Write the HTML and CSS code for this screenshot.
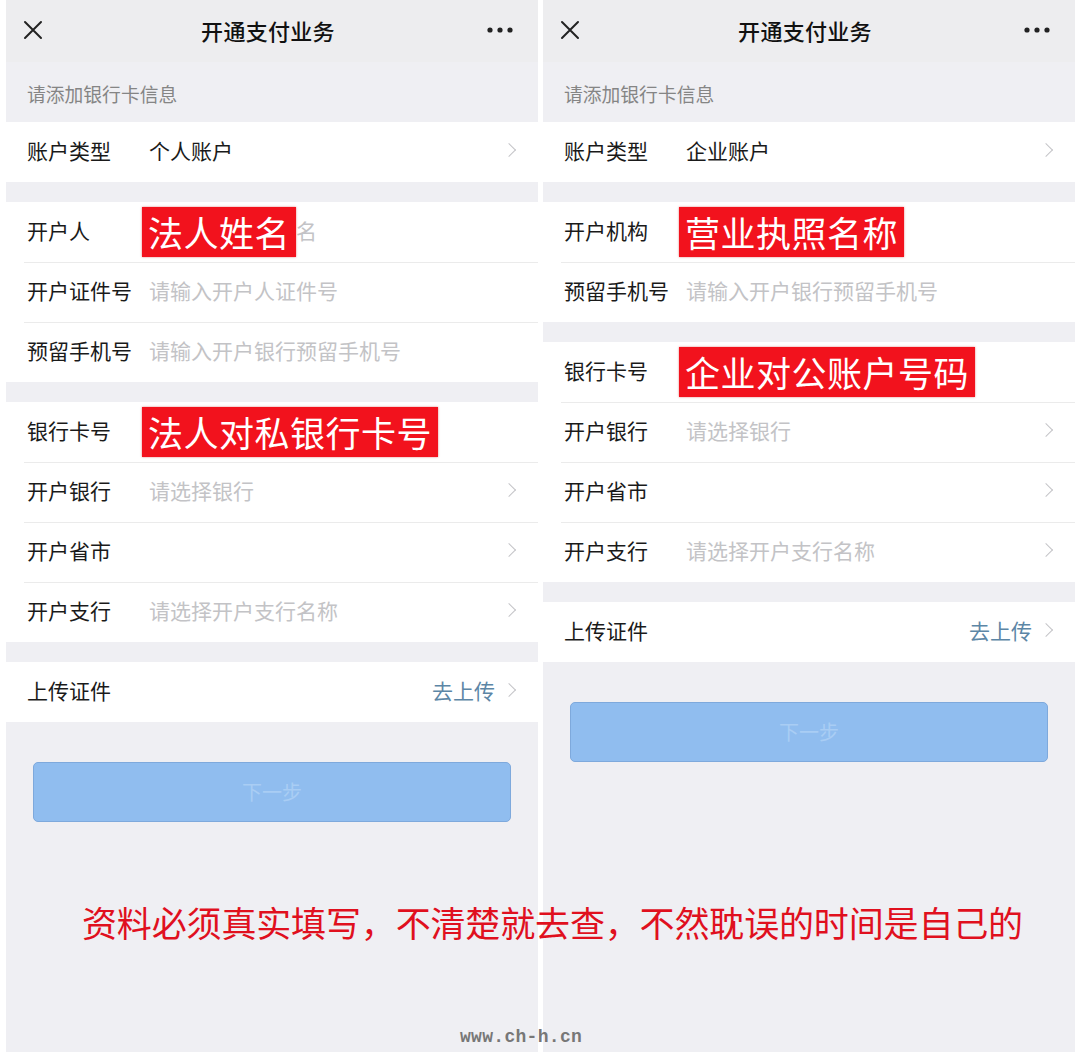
FILE: index.html
```html
<!DOCTYPE html>
<html lang="zh-CN">
<head>
<meta charset="utf-8">
<title>开通支付业务</title>
<link rel="stylesheet" href="styles.css">
</head>
<body>
<div class="canvas">
  <div class="screens">
    <section class="phone">
      <header class="nav">
        <svg class="nav-close" viewBox="0 0 20 20" width="20" height="20"><path d="M2 2 L18 18 M18 2 L2 18" stroke="#222" stroke-width="2" fill="none" stroke-linecap="round"/></svg>
        <div class="nav-title">开通支付业务</div>
        <svg class="nav-more" viewBox="0 0 26 6" width="26" height="6"><circle cx="3" cy="3" r="2.6" fill="#222"/><circle cx="13" cy="3" r="2.6" fill="#222"/><circle cx="23" cy="3" r="2.6" fill="#222"/></svg>
      </header>
      <div class="section-title">请添加银行卡信息</div>
      <div class="group">
        <div class="row"><span class="label">账户类型</span><span class="value">个人账户</span><span class="chev"></span></div>
      </div>
      <div class="group">
        <div class="row"><span class="label">开户人</span><span class="value ph"><span class="mark">法人姓名</span>名</span></div>
        <div class="row"><span class="label">开户证件号</span><span class="value ph">请输入开户人证件号</span></div>
        <div class="row"><span class="label">预留手机号</span><span class="value ph">请输入开户银行预留手机号</span></div>
      </div>
      <div class="group">
        <div class="row"><span class="label">银行卡号</span><span class="value"><span class="mark">法人对私银行卡号</span></span></div>
        <div class="row"><span class="label">开户银行</span><span class="value ph">请选择银行</span><span class="chev"></span></div>
        <div class="row"><span class="label">开户省市</span><span class="value blur"></span><span class="chev"></span></div>
        <div class="row"><span class="label">开户支行</span><span class="value ph">请选择开户支行名称</span><span class="chev"></span></div>
      </div>
      <div class="group">
        <div class="row"><span class="label">上传证件</span><span class="value"></span><span class="link">去上传</span><span class="chev"></span></div>
      </div>
      <div class="btn">下一步</div>
    </section>
    <section class="phone">
      <header class="nav">
        <svg class="nav-close" viewBox="0 0 20 20" width="20" height="20"><path d="M2 2 L18 18 M18 2 L2 18" stroke="#222" stroke-width="2" fill="none" stroke-linecap="round"/></svg>
        <div class="nav-title">开通支付业务</div>
        <svg class="nav-more" viewBox="0 0 26 6" width="26" height="6"><circle cx="3" cy="3" r="2.6" fill="#222"/><circle cx="13" cy="3" r="2.6" fill="#222"/><circle cx="23" cy="3" r="2.6" fill="#222"/></svg>
      </header>
      <div class="section-title">请添加银行卡信息</div>
      <div class="group">
        <div class="row"><span class="label">账户类型</span><span class="value">企业账户</span><span class="chev"></span></div>
      </div>
      <div class="group">
        <div class="row"><span class="label">开户机构</span><span class="value"><span class="mark">营业执照名称</span></span></div>
        <div class="row"><span class="label">预留手机号</span><span class="value ph">请输入开户银行预留手机号</span></div>
      </div>
      <div class="group">
        <div class="row"><span class="label">银行卡号</span><span class="value"><span class="mark">企业对公账户号码</span></span></div>
        <div class="row"><span class="label">开户银行</span><span class="value ph">请选择银行</span><span class="chev"></span></div>
        <div class="row"><span class="label">开户省市</span><span class="value blur"></span><span class="chev"></span></div>
        <div class="row"><span class="label">开户支行</span><span class="value ph">请选择开户支行名称</span><span class="chev"></span></div>
      </div>
      <div class="group">
        <div class="row"><span class="label">上传证件</span><span class="value"></span><span class="link">去上传</span><span class="chev"></span></div>
      </div>
      <div class="btn">下一步</div>
    </section>
  </div>
  <div class="caption">资料必须真实填写，不清楚就去查，不然耽误的时间是自己的</div>
  <div class="watermark">www.ch-h.cn</div>
</div>
</body>
</html>
```

FILE: styles.css
```css
* { box-sizing: border-box; }
html, body { margin: 0; padding: 0; background: #ffffff; }
body {
  font-family: "Noto Sans CJK SC", "Noto Sans", sans-serif;
  width: 1080px;
  height: 1058px;
  overflow: hidden;
}
.canvas { position: relative; width: 1080px; height: 1058px; }
.screens {
  display: flex;
  gap: 5px;
  padding-left: 6px;
}
.phone {
  width: 532px;
  height: 1052px;
  background: #efeff3;
  display: flex;
  flex-direction: column;
}
.nav {
  height: 62px;
  display: grid;
  grid-template-columns: 1fr auto 1fr;
  align-items: center;
  padding: 0 25px 2px 17px;
  background: #ededef;
}
.nav-more { justify-self: end; }
.nav-title {
  font-size: 22px;
  font-weight: 500;
  color: #111;
  letter-spacing: 0.3px;
}
.section-title {
  height: 60px;
  padding: 19px 0 0 21px;
  font-size: 18.8px;
  line-height: 26px;
  color: #858585;
}
.group {
  background: #ffffff;
  margin-bottom: 20px;
}
.row {
  position: relative;
  height: 60px;
  display: flex;
  align-items: center;
  padding: 0 20px 4px 21px;
  font-size: 21px;
  color: #1a1a1a;
}
.row + .row::before {
  content: "";
  position: absolute;
  left: 18px;
  right: 0;
  top: 0;
  border-top: 1px solid #ebebeb;
}
.label { width: 122px; flex: none; white-space: nowrap; }
.value { flex: 1; white-space: nowrap; display: flex; align-items: center; }
.value.ph { color: #c3c3c6; }
.value.blur { height: 26px; }
.link { color: #5c86a6; margin-right: 9px; }
.chev {
  width: 10px;
  height: 10px;
  border-top: 1.6px solid #c4c4c8;
  border-right: 1.6px solid #c4c4c8;
  transform: rotate(45deg);
  margin-right: 4px;
}
.mark {
  display: inline-block;
  margin: 4px 0 0 -7px;
  height: 50px;
  padding: 0 6px;
  background: #f2121d;
  color: #ffffff;
  font-size: 35px;
  line-height: 50px;
  letter-spacing: 0.5px;
  box-shadow: 0 0 2px rgba(200, 0, 0, 0.5);
}
.btn {
  margin: 20px 27px 0 27px;
  height: 60px;
  border-radius: 5px;
  background: #90bdef;
  border: 1px solid #7ea9dc;
  display: flex;
  align-items: center;
  justify-content: center;
  padding-bottom: 2px;
  font-size: 20px;
  color: #a9cdf4;
}
.caption {
  position: absolute;
  left: 82px;
  top: 900px;
  font-size: 35px;
  line-height: 44px;
  color: #e0101e;
  letter-spacing: -0.15px;
  white-space: nowrap;
}
.watermark {
  position: absolute;
  left: 460px;
  top: 1025px;
  font-family: "Liberation Mono", monospace;
  font-weight: bold;
  font-size: 18px;
  line-height: 24px;
  color: #777;
  letter-spacing: 0.3px;
}
```
